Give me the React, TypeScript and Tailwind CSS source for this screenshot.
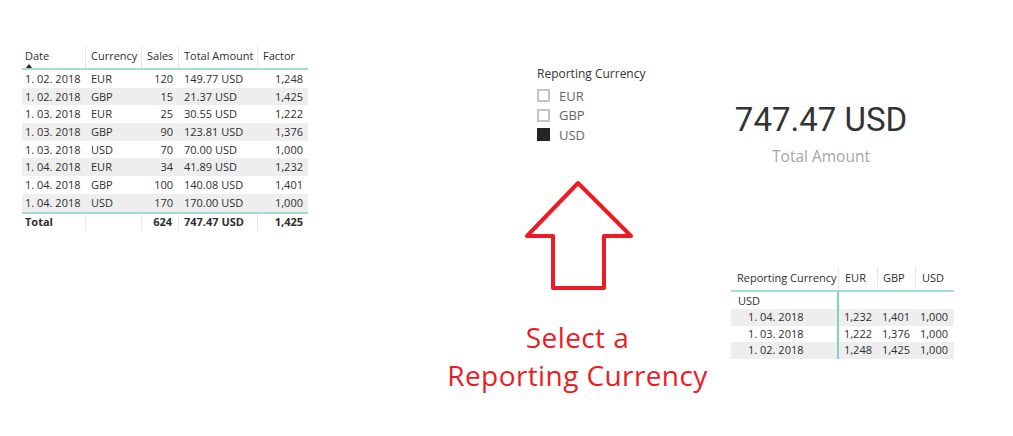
import React from "react";

const rows: string[][] = [
  ["1. 02. 2018", "EUR", "120", "149.77 USD", "1,248"],
  ["1. 02. 2018", "GBP", "15", "21.37 USD", "1,425"],
  ["1. 03. 2018", "EUR", "25", "30.55 USD", "1,222"],
  ["1. 03. 2018", "GBP", "90", "123.81 USD", "1,376"],
  ["1. 03. 2018", "USD", "70", "70.00 USD", "1,000"],
  ["1. 04. 2018", "EUR", "34", "41.89 USD", "1,232"],
  ["1. 04. 2018", "GBP", "100", "140.08 USD", "1,401"],
  ["1. 04. 2018", "USD", "170", "170.00 USD", "1,000"],
];

const matrixRows = [
  { d: "1. 04. 2018", v: ["1,232", "1,401", "1,000"], s: true },
  { d: "1. 03. 2018", v: ["1,222", "1,376", "1,000"], s: false },
  { d: "1. 02. 2018", v: ["1,248", "1,425", "1,000"], s: true },
];

function DataTable() {
  const grid = "grid grid-cols-[64px_56px_37px_79px_50px]";
  return (
    <div className="ml-[22px] mt-[46px] w-[286px] shrink-0 text-[11px] text-[#2e2e2e]">
      <div className={`${grid} h-[24px] border-b-2 border-[#a3dcd5]`}>
        <div className="border-r border-[#e8e8e8] pl-[3px] flex flex-col">
          <span className="leading-[16px] pt-[2px]">Date</span>
          <span className="ml-[1px] w-0 h-0 border-l-[3.5px] border-r-[3.5px] border-b-[4px] border-l-transparent border-r-transparent border-b-[#222]" />
        </div>
        <div className="border-r border-[#e8e8e8] pl-[5px] leading-[16px] pt-[2px]">Currency</div>
        <div className="border-r border-[#e8e8e8] pl-[5px] leading-[16px] pt-[2px]">Sales</div>
        <div className="border-r border-[#e8e8e8] pl-[5px] leading-[16px] pt-[2px]">Total Amount</div>
        <div className="pl-[5px] leading-[16px] pt-[2px]">Factor</div>
      </div>
      {rows.map((r, i) => (
        <div
          key={i}
          className={`${grid} h-[17.7px] items-center leading-[16px] ${i % 2 === 1 ? "bg-[#eeeeee]" : ""}`}
        >
          <div className="pl-[3px] whitespace-nowrap">{r[0]}</div>
          <div className="pl-[5px]">{r[1]}</div>
          <div className="pr-[6px] text-right">{r[2]}</div>
          <div className="pl-[5px] whitespace-nowrap">{r[3]}</div>
          <div className="pr-[5px] text-right">{r[4]}</div>
        </div>
      ))}
      <div className={`${grid} h-[19px] border-t-2 border-[#a3dcd5] font-bold leading-[16px]`}>
        <div className="border-r border-[#e8e8e8] pl-[3px] flex items-center">Total</div>
        <div className="border-r border-[#e8e8e8]" />
        <div className="border-r border-[#e8e8e8] pr-[6px] text-right flex items-center justify-end">624</div>
        <div className="border-r border-[#e8e8e8] pl-[5px] flex items-center whitespace-nowrap">747.47 USD</div>
        <div className="pr-[5px] flex items-center justify-end">1,425</div>
      </div>
    </div>
  );
}

function Slicer() {
  const items = [
    { t: "EUR", on: false },
    { t: "GBP", on: false },
    { t: "USD", on: true },
  ];
  return (
    <div className="mt-[66px] ml-[97px] flex flex-col">
      <div className="text-[12px] leading-[16px] text-[#333333]">Reporting Currency</div>
      <div className="mt-[4px] flex flex-col">
        {items.map((it) => (
          <div key={it.t} className="h-[19.5px] flex items-center">
            <span
              className={`w-[13px] h-[13px] box-border ${
                it.on ? "bg-[#252525] border-2 border-[#252525]" : "border-2 border-[#c4c4c4] bg-white"
              }`}
            />
            <span className="ml-[9px] text-[13px] leading-[16px] text-[#666666]">{it.t}</span>
          </div>
        ))}
      </div>
    </div>
  );
}

function Arrow() {
  return (
    <svg className="block mt-[31px] ml-[80px]" width="120" height="120" viewBox="0 0 120 120">
      <polygon
        points="58,7 7,60 33,60 33,112 84,112 84,60 111,60"
        fill="none"
        stroke="#ed1c24"
        strokeWidth="4"
        strokeLinejoin="round"
      />
    </svg>
  );
}

function Matrix() {
  return (
    <div className="mt-[101px] w-[223px] text-[11px] text-[#2e2e2e]">
      <div className="grid grid-cols-[108px_39px_38px_38px] h-[25px] border-b-2 border-[#a3dcd5]">
        <div className="border-r border-[#e8e8e8] pl-[6px] pt-[3px] leading-[16px] whitespace-nowrap">Reporting Currency</div>
        <div className="border-r border-[#e8e8e8] pl-[6px] pt-[3px] leading-[16px]">EUR</div>
        <div className="border-r border-[#e8e8e8] pl-[5px] pt-[3px] leading-[16px]">GBP</div>
        <div className="pl-[6px] pt-[3px] leading-[16px]">USD</div>
      </div>
      <div className="grid grid-cols-[108px_115px] h-[17px]">
        <div className="border-r-2 border-[#7fcfc6] pl-[7px] flex items-center leading-[16px]">USD</div>
        <div />
      </div>
      {matrixRows.map((r) => (
        <div
          key={r.d}
          className={`grid grid-cols-[108px_39px_38px_38px] h-[16.5px] leading-[16px] ${r.s ? "bg-[#eeeeee]" : ""}`}
        >
          <div className="border-r-2 border-[#7fcfc6] pl-[17px] flex items-center whitespace-nowrap">{r.d}</div>
          <div className="pr-[6px] flex items-center justify-end">{r.v[0]}</div>
          <div className="pr-[6px] flex items-center justify-end">{r.v[1]}</div>
          <div className="pr-[6px] flex items-center justify-end">{r.v[2]}</div>
        </div>
      ))}
    </div>
  );
}

export default function App() {
  return (
    <div className="w-[1013px] h-[436px] bg-white flex items-start overflow-hidden font-['Open_Sans',sans-serif]">
      <DataTable />
      <div className="ml-[132px] w-[275px] shrink-0 flex flex-col">
        <Slicer />
        <Arrow />
        <div className="mt-[22px] text-center text-[28px] leading-[38px] tracking-[0.4px] text-[#ed1c24] whitespace-nowrap">
          <div>Select a</div>
          <div>Reporting Currency</div>
        </div>
      </div>
      <div className="ml-[16px] w-[224px] shrink-0 flex flex-col">
        <div className="mt-[103px] ml-[4px] w-[172px] flex flex-col items-center">
          <div className="font-['Roboto',sans-serif] text-[33px] leading-[33px] text-[#333333] whitespace-nowrap">
            747.47 USD
          </div>
          <div className="mt-[10px] text-[15.5px] leading-[20px] text-[#a6a6a6] whitespace-nowrap">Total Amount</div>
        </div>
        <Matrix />
      </div>
    </div>
  );
}
